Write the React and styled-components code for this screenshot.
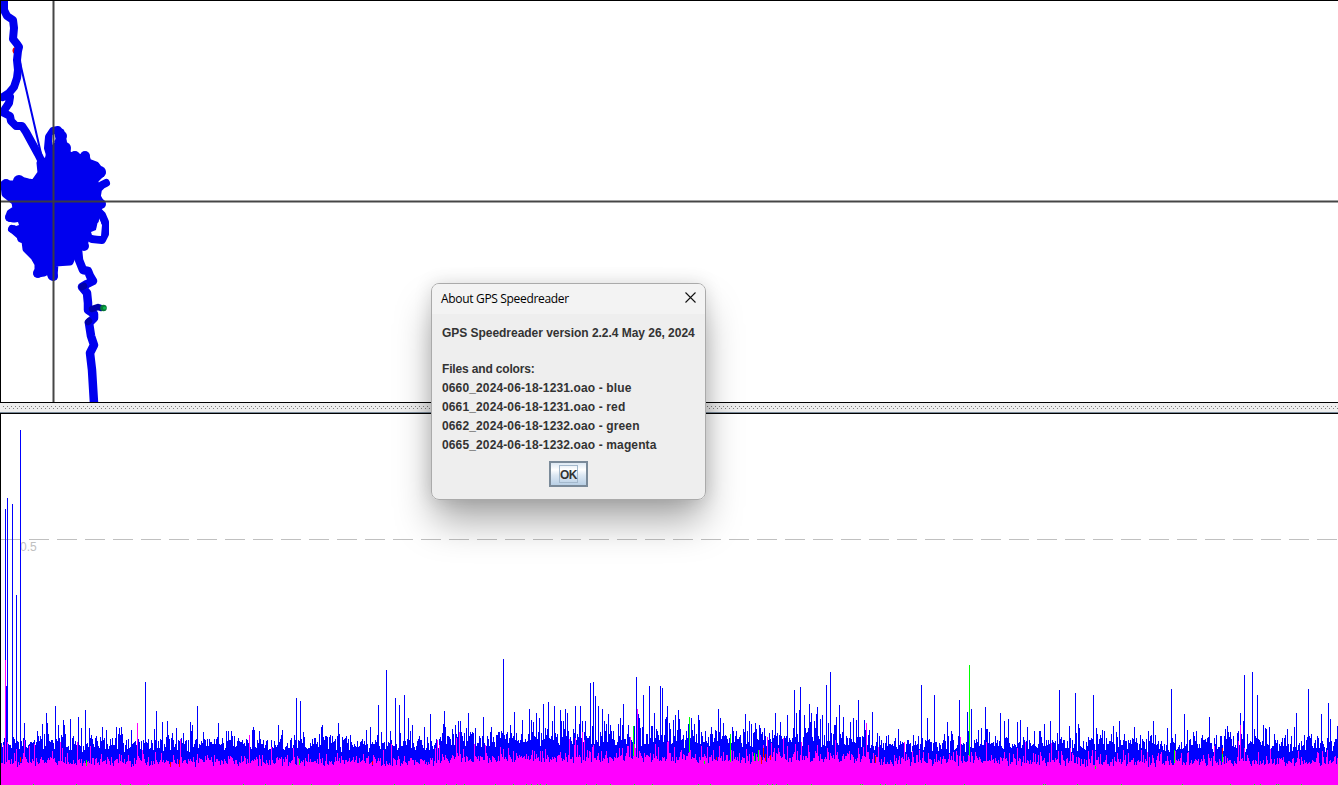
import React from "react";
import styled, { createGlobalStyle } from "styled-components";

const Global = createGlobalStyle`
  * { box-sizing: border-box; }
  html, body { margin: 0; padding: 0; overflow: hidden; background: #fff; }
`;

const Window = styled.div`
  position: relative;
  display: flex;
  flex-direction: column;
  width: 1338px;
  height: 785px;
  overflow: hidden;
  background: #fff;
`;

const MapPane = styled.section`
  height: 403px;
  border: 1px solid #000;
  border-right: 0;
  overflow: hidden;
`;

const Divider = styled.div`
  height: 10px;
  padding: 3px 0 0 3px;
  background: #eee;
  border-bottom: 1px solid #7a8a99;
`;

const Grip = styled.div`
  height: 4px;
  background: repeating-linear-gradient(90deg, #808080 0 1px, transparent 1px 4px) 0 0 / 100% 1px no-repeat,
    repeating-linear-gradient(90deg, transparent 0 2px, #808080 2px 3px, transparent 3px 4px) 0 2px / 100% 1px no-repeat;
`;

const ChartPane = styled.section`
  height: 372px;
  border-top: 1px solid #000;
  border-left: 1px solid #000;
  overflow: hidden;
`;

const Drawing = styled.svg`
  display: block;
`;

const Dialog = styled.div`
  position: absolute;
  left: 431px;
  top: 283px;
  width: 275px;
  height: 217px;
  display: flex;
  flex-direction: column;
  background: #eee;
  border: 1px solid #aaa;
  border-radius: 8px;
  overflow: hidden;
`;

const Shadow = styled.div`
  position: absolute;
  left: 431px;
  top: 283px;
  width: 275px;
  height: 217px;
  border-radius: 8px;
  box-shadow: 0 24px 38px -3px rgba(0, 0, 0, 0.34), 0 0 18px rgba(0, 0, 0, 0.13);
`;

const TitleBar = styled.header`
  display: flex;
  align-items: center;
  justify-content: space-between;
  height: 30px;
  padding: 0 9.5px 0 9px;
  background: #f3f3f3;
  color: #000;
  font: 12px/30px "Open Sans", sans-serif;
  letter-spacing: -0.32px;
  white-space: nowrap;
`;

const CloseIcon = styled.svg`
  margin-bottom: 3px;
`;

const Message = styled.div`
  display: flex;
  flex-direction: column;
  padding: 10px 0 0 10px;
  color: #333;
  font: bold 12px/19px "Liberation Sans", sans-serif;
  white-space: nowrap;
`;

const Line = styled.div`
  height: 19px;
  margin-bottom: ${(p) => p.$gap || 0}px;
  letter-spacing: ${(p) => p.$spacing}px;
`;

const OkButton = styled.button`
  align-self: center;
  display: flex;
  align-items: center;
  justify-content: center;
  width: 39px;
  height: 26px;
  margin-top: 6px;
  padding: 0;
  border: 2px solid #7a8a99;
  border-radius: 0;
  background: linear-gradient(#dde8f3 0%, #fff 30%, #dde8f3 55%, #b8cfe5 100%);
`;

const FocusBox = styled.span`
  width: 19px;
  height: 18px;
  border: 1px solid #a3b8cc;
  color: #333;
  font: bold 12px/18px "Liberation Sans", sans-serif;
  letter-spacing: -0.6px;
  text-align: center;
`;

const BLOB =
  "M40 163 L48 160 L50 152 L58 144 L57 132 L61 132 L64 146 L67 150 L68 156 L75 155 L80 158 L86 156 L88 162 L96 165 L102 173 L99 176 L95 180 L97 196 L101 203 L98 209 L95 222 L93 229 L87 233 L84 246 L78 248 L73 255 L70 262 L55 263 L54 277 L51 276 L49 270 L44 273 L37 274 L38 270 L38 264 L34 257 L26 249 L25 241 L20 236 L12 229 L21 228 L18 220 L9 218 L10 213 L16 209 L15 202 L5 194 L4 184 L14 184 L20 180 L28 182 L34 183 L41 173 Z";

const LOBES = [
  [75, 156, 5], [85, 156, 5], [19, 181, 6], [6, 184, 5], [62, 136, 5], [100, 172, 6], [65, 148, 6],
  [10, 217, 5], [38, 273, 5], [53, 276, 5], [84, 246, 5], [22, 238, 5], [101, 204, 5],
];

function GpsMap() {
  const track = { fill: "none", stroke: "#0000ee", strokeLinejoin: "round", strokeLinecap: "round" };
  return (
    <Drawing width="1337" height="401" viewBox="1 1 1337 401">
      <circle cx="16" cy="50.500" r="3.500" fill="#e00" />
      <path {...track} strokeWidth="2" d="M19 58 L42 158" />
      <path
        {...track}
        strokeWidth="8"
        d="M4 0 L4 10 L7 16 L13 20 L14 28 L13 39 L17 44 L19 47 L18 51 L17 60 L18 70 L17 78 L14 87 L9 93 L3 97 M10 97 L9 103 L5 109 L4 113 L10 116 L11 121 L16 126 L22 126 L26 132 L32 143 L38 154 L43 164"
      />
      <path d={BLOB} {...track} strokeWidth="7" fill="#0000ee" />
      {LOBES.map(([x, y, r]) => (
        <circle key={`${x}-${y}`} cx={x} cy={y} r={r} fill="#0000ee" />
      ))}
      <path
        {...track}
        strokeWidth="8"
        d="M51 158 L48 148 L49 137 L53 131 L58 130 L62 137 L64 150 M97 195 L98 189 L102 185 L106 183 M98 211 L102 215 L105 222 L105 234 L102 240 L92 239 L87 236 M12 229 L18 232 L24 236"
      />
      <path d="M52.500 135 L54.500 134 L55.500 139 L53 143 L52 142 Z M100 221.500 L102 225 L101 236 L92 235 L91 232 L96 230 L97.500 223 Z M12 223 L18 222 L19 225 L16 226 Z" fill="#fff" />
      <path
        {...track}
        strokeWidth="8.500"
        d="M78 250 L79 260 L83 270 L88 271 L90 276 L93 281 L87 284 L82 287 L87 293 L88 303 L88 310 L94 314 L94 318 L89 323 L91 336 L94 345 L90 353 L92 370 L94 403"
      />
      <path {...track} stroke="#0000a8" strokeWidth="6.500" d="M92 309 L98 307 L101 308 M82 287 L84 286 M88 322 L89 321" />
      <circle cx="103.500" cy="308" r="3.300" fill="#087838" />
      <circle cx="104.500" cy="308" r="1.500" fill="#0bb94a" />
      <path d="M53.500 1 V402 M1 201.500 H1338" stroke="#3c3c3c" strokeOpacity=".95" strokeWidth="2" fill="none" />
    </Drawing>
  );
}

/* [x, top] of the peaks that rise above the noise floor */
const BLUE_PEAKS = [
  [5, 509], [6, 686], [7, 498], [12, 504], [16, 595], [20, 430], [24, 723], [42, 724], [46, 713], [55, 706], [58, 725],
  [63, 720], [64, 725], [70, 719], [78, 717], [81, 728], [85, 710], [89, 728], [106, 730], [116, 727], [119, 728],
  [121, 727], [145, 682], [156, 711], [162, 722], [167, 721], [176, 728], [190, 722], [192, 725], [197, 706],
  [218, 723], [226, 731], [253, 727], [259, 731], [278, 725], [296, 698], [300, 701], [339, 734], [378, 705],
  [386, 670], [395, 698], [399, 705], [404, 695], [408, 718], [412, 725], [430, 714], [443, 724], [452, 729],
  [458, 721], [460, 721], [468, 713], [475, 728], [483, 717], [491, 727], [503, 659], [510, 725], [514, 712],
  [529, 709], [531, 720], [533, 722], [539, 718], [543, 704], [548, 702], [552, 721], [554, 706], [560, 710],
  [563, 721], [565, 709], [567, 713], [575, 706], [580, 706], [585, 721], [590, 683], [593, 682], [595, 696],
  [598, 706], [602, 709], [604, 721], [606, 724], [608, 714], [623, 704], [636, 677], [638, 714], [639, 718],
  [643, 695], [649, 686], [654, 713], [660, 686], [662, 688], [667, 706], [669, 723], [673, 720], [675, 715],
  [678, 710], [679, 719], [688, 724], [691, 718], [694, 724], [699, 720], [718, 709], [732, 727], [743, 729],
  [751, 724], [755, 723], [787, 715], [794, 690], [796, 713], [799, 710], [800, 687], [804, 715], [809, 704],
  [810, 722], [816, 714], [817, 707], [822, 715], [826, 685], [828, 723], [830, 672], [839, 705], [843, 717],
  [853, 718], [858, 700], [864, 720], [872, 712], [921, 685], [927, 718], [934, 695], [947, 722], [959, 700],
  [967, 712], [971, 709], [981, 728], [985, 707], [987, 729], [1000, 713], [1004, 721], [1008, 719], [1017, 722],
  [1020, 720], [1040, 731], [1044, 724], [1050, 721], [1059, 690], [1069, 726], [1075, 693], [1078, 724],
  [1093, 695], [1096, 728], [1102, 730], [1113, 726], [1119, 721], [1134, 727], [1153, 721], [1167, 728],
  [1171, 689], [1184, 714], [1209, 717], [1227, 726], [1238, 731], [1240, 713], [1243, 721], [1244, 675],
  [1252, 672], [1257, 695], [1266, 729], [1287, 729], [1294, 727], [1296, 713], [1308, 689], [1321, 714],
  [1328, 703], [1330, 719], [1337, 726],
];

const MAGENTA_PEAKS = [
  [5, 660], [7, 742], [3, 745], [24, 740], [29, 746], [34, 744], [60, 742], [77, 742], [90, 746], [137, 723],
  [180, 739], [249, 735], [271, 747], [391, 744], [437, 740], [439, 745], [456, 738], [459, 732], [500, 747],
  [569, 739], [575, 738], [582, 732], [584, 740], [593, 745], [627, 746], [630, 737], [637, 709], [655, 744],
  [668, 741], [707, 747], [746, 749], [763, 745], [767, 737], [783, 738], [801, 742], [835, 740], [866, 723],
  [878, 747], [904, 742], [960, 737], [986, 742], [1025, 742], [1051, 743], [1214, 746], [1238, 741],
  [1240, 725], [1244, 748], [1327, 750],
];

const OTHER_MARKS = [
  ["#00ff00", 86, 760, 6], ["#00ff00", 299, 759, 6], ["#00ff00", 633, 726, 30], ["#00ff00", 689, 717, 35],
  ["#00ff00", 730, 734, 28], ["#00ff00", 754, 753, 8], ["#00ff00", 758, 750, 11], ["#00ff00", 969, 665, 91],
  ["#00ff00", 1174, 750, 13], ["#00ff00", 1222, 754, 8], ["#00ff00", 1095, 766, 3], ["#00ff00", 704, 761, 3],
  ["#ff0000", 20, 757, 5], ["#ff0000", 170, 762, 5], ["#ff0000", 179, 760, 7], ["#ff0000", 372, 761, 4],
  ["#ff0000", 761, 757, 7], ["#ff0000", 763, 748, 9], ["#ff0000", 765, 754, 7], ["#ff0000", 770, 755, 5],
  ["#ff0000", 875, 756, 7], ["#ff0000", 1222, 748, 6], ["#ff0000", 716, 757, 3],
];

const BASE_MARKS = [
  33, 76, 120, 130, 148, 243, 265, 292, 311, 339, 394, 424, 446, 456, 464, 495, 513, 526, 531, 537, 540, 546, 586, 596,
  610, 634, 652, 698, 710, 758, 767, 772, 776, 787, 811, 860, 862, 880, 885, 895, 906, 925, 964, 1043, 1045, 1077, 1121,
  1182, 1230, 1254, 1260, 1276, 1278, 1301,
];

function noise(seed) {
  let s = seed;
  return () => {
    s ^= s << 13;
    s ^= s >>> 17;
    s ^= s << 5;
    return (s >>> 0) / 4294967296;
  };
}

/* each column rises from its deepest level by an even jitter plus an exponentially distributed height */
function floorPath(seed, deepestAt, jitter, meanAt, limit, peaks) {
  const rnd = noise(seed);
  for (let i = 0; i < 20; i += 1) rnd();
  const tops = new Map(peaks);
  let d = "";
  for (let x = 1; x < 1338; x += 1) {
    const even = rnd() * jitter;
    const rise = Math.min(limit, -Math.log(1 - rnd() * 0.99) * meanAt(x));
    const y = tops.has(x) ? tops.get(x) : Math.round(deepestAt(x) - even - rise);
    d += `M${x} 785V${y}h1V785z`;
  }
  return d;
}

const busy = (x) => x > 440 && x < 870;

const BLUE_PATH = floorPath(7193, (x) => (busy(x) ? 749 : 753), 13, (x) => (busy(x) ? 7 : 4.5), 26, BLUE_PEAKS);
const MAGENTA_PATH = floorPath(2417, (x) => (busy(x) ? 764 : 767), 7, (x) => (busy(x) ? 4.5 : 3), 16, MAGENTA_PEAKS);

function SpeedChart() {
  return (
    <Drawing width="1337" height="371" viewBox="1 414 1337 371" shapeRendering="crispEdges">
      <path d="M0.5 539.500 H1338" stroke="#c0c0c0" strokeDasharray="20 8" />
      <text x="20" y="551" fill="#c0c0c0" fontFamily="Liberation Sans, sans-serif" fontSize="12">0.5</text>
      <path d={BLUE_PATH} fill="#0000ff" />
      <path d={MAGENTA_PATH} fill="#ff00ff" />
      {OTHER_MARKS.map(([color, x, y, h]) => (
        <rect key={`${color}${x}`} x={x} y={y} width="1" height={h} fill={color} />
      ))}
      {BASE_MARKS.map((x) => (
        <rect key={x} x={x} y="784" width="1" height="1" fill="#00ff00" />
      ))}
    </Drawing>
  );
}

const FILES = [
  "0660_2024-06-18-1231.oao - blue",
  "0661_2024-06-18-1231.oao - red",
  "0662_2024-06-18-1232.oao - green",
  "0665_2024-06-18-1232.oao - magenta",
];

export default function App() {
  return (
    <Window>
      <Global />
      <MapPane>
        <GpsMap />
      </MapPane>
      <Divider>
        <Grip />
      </Divider>
      <ChartPane>
        <SpeedChart />
      </ChartPane>
      <Shadow />
      <Dialog role="dialog">
        <TitleBar>
          About GPS Speedreader
          <CloseIcon width="11" height="11" viewBox="0 0 11 11" stroke="#111" strokeWidth="1.1">
            <path d="M.5 .5 L10.500 10.500 M10.500 .5 L.5 10.500" />
          </CloseIcon>
        </TitleBar>
        <Message>
          <Line $gap={17} $spacing={-0.035}>GPS Speedreader version 2.2.4 May 26, 2024</Line>
          <Line $spacing={-0.16}>Files and colors:</Line>
          {FILES.map((f) => (
            <Line key={f} $spacing={0.13}>{f}</Line>
          ))}
        </Message>
        <OkButton>
          <FocusBox>OK</FocusBox>
        </OkButton>
      </Dialog>
    </Window>
  );
}
